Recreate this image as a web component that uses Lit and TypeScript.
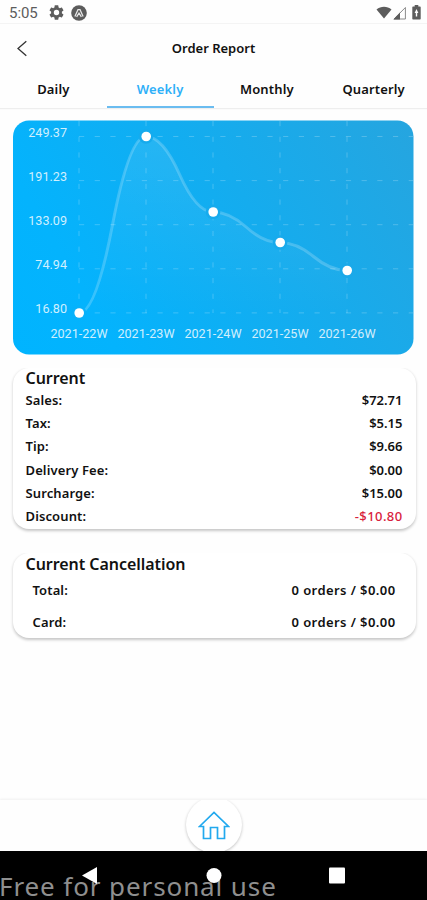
import { LitElement, html, svg, css } from "lit";
import { customElement, property, state } from "lit/decorators.js";
import { classMap } from "lit/directives/class-map.js";

interface Sample {
  week: string;
  x: number;
  y: number;
  halo: string;
}

@customElement("status-bar")
class StatusBar extends LitElement {
  static styles = css`
    :host {
      display: flex;
      align-items: center;
      height: 24px;
      padding: 2px 6px 0 9px;
      box-sizing: border-box;
      border-bottom: 1px solid #f4f4f4;
      color: #5c5c5c;
      font: 15px/22px Roboto, sans-serif;
    }
    .time { letter-spacing: -0.05px; width: 40px; }
    .gear { margin-right: 7px; }
    .spacer { flex: 1; }
    .signal { margin: 0 6px 0 1px; }
  `;
  render() {
    return html`
      <span class="time">5:05</span>
      <svg class="gear" width="15" height="15" viewBox="2 2 20 20">
        <path fill="#5c5c5c" fill-rule="evenodd" d="M19.14 12.94c.04-.3.06-.61.06-.94s-.02-.64-.07-.94l2.03-1.58c.18-.14.23-.41.12-.61l-1.92-3.32c-.12-.22-.37-.29-.59-.22l-2.39.96c-.5-.38-1.03-.7-1.62-.94l-.36-2.54A.48.48 0 0 0 13.92 2.4h-3.84c-.24 0-.43.17-.47.41l-.36 2.54c-.59.24-1.13.57-1.62.94l-2.39-.96c-.22-.08-.47 0-.59.22L2.74 8.87c-.12.21-.08.47.12.61l2.03 1.58c-.05.3-.09.63-.09.94s.02.64.07.94l-2.03 1.58c-.18.14-.23.41-.12.61l1.92 3.32c.12.22.37.29.59.22l2.39-.96c.5.38 1.03.7 1.62.94l.36 2.54c.05.24.24.41.48.41h3.84c.24 0 .44-.17.47-.41l.36-2.54c.59-.24 1.13-.56 1.62-.94l2.39.96c.22.08.47 0 .59-.22l1.92-3.32c.12-.22.07-.47-.12-.61zM12 15.6a3.6 3.6 0 1 1 0-7.2 3.6 3.6 0 0 1 0 7.2z"></path>
      </svg>
      <svg width="16" height="16" viewBox="0 0 16 16">
        <circle cx="8" cy="8" r="7.8" fill="#5c5c5c"></circle>
        <path d="M3.9 11.6L7 4.6h2l3.1 7M5.6 11.8L8 8.2l2.4 3.6" fill="none" stroke="#e8e8e8" stroke-width="1.3"></path>
      </svg>
      <span class="spacer"></span>
      <svg width="16" height="13" viewBox="0 0 16 13">
        <path fill="#5c5c5c" d="M.5 3.4C4.8-.2 11.2-.2 15.5 3.4L8 12.6z"></path>
      </svg>
      <svg class="signal" width="13" height="14" viewBox="0 0 13 14">
        <path fill="none" stroke="#8a8a8a" d="M1 13L12.4 1.5V13z"></path>
        <path fill="#5c5c5c" d="M.3 13.4L7 6.6v6.8z"></path>
      </svg>
      <svg width="9" height="15" viewBox="0 0 9 15">
        <path fill="#5c5c5c" fill-rule="evenodd" d="M2.7 0h3.6v1.5H8a.7.7 0 0 1 .7.7v11.6a.7.7 0 0 1-.7.7H1a.7.7 0 0 1-.7-.7V2.2a.7.7 0 0 1 .7-.7h1.7zM4.5 4L2.600 8h1.2v3.5h1.4V8h1.2z"></path>
      </svg>
    `;
  }
}

@customElement("sales-chart")
class SalesChart extends LitElement {
  static styles = css`
    :host { display: block; margin: 11px 13px 0; height: 235px; }
    svg { display: block; }
    .label { fill: #fff; fill-opacity: 0.82; font: 12.6px Roboto, sans-serif; }
    .end { text-anchor: end; }
    .mid { text-anchor: middle; }
    .grid { stroke: #fff; stroke-opacity: 0.22; stroke-dasharray: 5.2 10.5; }
    .line { fill: none; stroke: #fff; stroke-opacity: 0.2; stroke-width: 3; }
  `;

  private samples: Sample[] = [
    { week: "2021-22W", x: 66, y: 193, halo: "#08b1fa" },
    { week: "2021-23W", x: 133, y: 16.5, halo: "#16abed" },
    { week: "2021-24W", x: 200, y: 92, halo: "#17abed" },
    { week: "2021-25W", x: 267, y: 122.5, halo: "#19aaec" },
    { week: "2021-26W", x: 334, y: 150.5, halo: "#1ba9e9" },
  ];
  private ticks = ["249.37", "191.23", "133.09", "74.94", "16.80"];

  private curve() {
    const p = this.samples;
    let d = `M${p[0].x} ${p[0].y}`;
    for (let i = 0; i < p.length - 1; i++) {
      const a = p[i];
      const b = p[i + 1];
      const mx = (a.x + b.x) / 2;
      const my = (a.y + b.y) / 2;
      d += ` Q${(a.x + mx) / 2} ${a.y} ${mx} ${my} Q${(b.x + mx) / 2} ${b.y} ${b.x} ${b.y}`;
    }
    return d;
  }

  render() {
    const d = this.curve();
    return html`
      <svg width="401" height="235" viewBox="0 0 401 235">
        <defs>
          <linearGradient id="bg" gradientUnits="userSpaceOnUse" x1="0" y1="235" x2="401" y2="0">
            <stop offset="0" stop-color="#00b4ff"></stop>
            <stop offset="0.2" stop-color="#04b3fd"></stop>
            <stop offset="1" stop-color="#26a5df"></stop>
          </linearGradient>
          <linearGradient id="area" x1="0" y1="0" x2="0" y2="1">
            <stop offset="0" stop-color="#fff" stop-opacity="0.09"></stop>
            <stop offset="1" stop-color="#fff" stop-opacity="0"></stop>
          </linearGradient>
        </defs>
        <rect y="0.5" width="400.5" height="234" rx="16" fill="url(#bg)"></rect>
        <path d="${d} L334 193 L66 193Z" fill="url(#area)"></path>
        ${this.ticks.map((t, i) => {
          const y = 16.5 + i * 44.1;
          return svg`<line class="grid" x1="66" x2="400" y1=${y} y2=${y}></line>
            <text class="label end" x="54" y=${y}>${t}</text>`;
        })}
        ${this.samples.map(
          (s) => svg`<line class="grid" x1=${s.x} x2=${s.x} y1="1" y2="193"></line>
            <text class="label mid" x=${s.x} y="217.500">${s.week}</text>`
        )}
        <path class="line" d=${d}></path>
        ${this.samples.map(
          (s) => svg`<circle cx=${s.x} cy=${s.y} r="7.300" fill=${s.halo}></circle>
            <circle cx=${s.x + 0.2} cy=${s.y} r="4.800" fill="#fff"></circle>`
        )}
      </svg>
    `;
  }
}

@customElement("summary-card")
class SummaryCard extends LitElement {
  @property() heading = "";
  @property({ attribute: false }) rows: [string, string][] = [];
  @property({ type: Boolean, reflect: true }) roomy = false;

  static styles = css`
    :host {
      display: block;
      box-sizing: border-box;
      margin: 13px 11.5px 0 12.5px;
      height: 161px;
      padding: 0 13px;
      border-radius: 16px;
      background: #fff;
      box-shadow: 0 1.5px 3px rgba(0, 0, 0, 0.22);
      clip-path: inset(0 -6px -8px -6px);
      font-family: "Noto Sans", sans-serif;
      color: #111;
    }
    :host([roomy]) { margin-top: 24px; height: 85px; }
    .heading { font-size: 16px; font-weight: 600; line-height: 20px; height: 20.5px; letter-spacing: -0.05px; }
    .row {
      display: flex;
      justify-content: space-between;
      height: 23.4px;
      line-height: 23.4px;
      font-size: 13px;
      font-weight: 600;
      letter-spacing: 0.12px;
    }
    .value { letter-spacing: 0; }
    .negative { color: #d8213b; font-weight: 500; letter-spacing: 0.4px; }
    :host([roomy]) .heading { height: 21px; line-height: 22px; }
    :host([roomy]) .row { height: 32px; line-height: 32px; padding: 0 7px; }
    :host([roomy]) .value { letter-spacing: 0.42px; }
  `;

  render() {
    return html`
      <div class="heading">${this.heading}</div>
      ${this.rows.map(
        ([name, value]) => html`<div class="row">
          <span>${name}</span>
          <span class=${classMap({ value: true, negative: value.startsWith("-") })}>${value}</span>
        </div>`
      )}
    `;
  }
}

@customElement("app-root")
class AppRoot extends LitElement {
  @state() private active = "Weekly";

  static styles = css`
    :host {
      display: flex;
      flex-direction: column;
      width: 427px;
      height: 900px;
      overflow: hidden;
      background: #fefefe;
      font-family: "Noto Sans", sans-serif;
    }
    .header {
      display: grid;
      grid-template-columns: 60px 1fr 60px;
      align-items: center;
      height: 48px;
      color: #111;
    }
    .back { margin-left: 16px; }
    .title { text-align: center; font-size: 13px; font-weight: 600; }
    .tabs {
      display: grid;
      grid-template-columns: repeat(4, 1fr);
      height: 36px;
      margin-bottom: 1px;
      box-sizing: border-box;
      box-shadow: 0 1px 1px #eee;
    }
    .tab {
      box-sizing: border-box;
      text-align: center;
      font-size: 13px;
      font-weight: 600;
      line-height: 34px;
      letter-spacing: 0.15px;
      color: #111;
      border-bottom: 2px solid transparent;
    }
    .active { color: #2fb0f8; border-color: #6abcf0; }
    .fill { flex: 1; }
    .dock {
      display: flex;
      justify-content: center;
      height: 51px;
      box-shadow: 0 -1px 2px #f0f0f0;
      overflow: hidden;
    }
    .home {
      display: grid;
      place-items: center;
      flex: none;
      width: 56px;
      height: 56px;
      margin-top: -3px;
      border-radius: 50%;
      background: #fff;
      box-shadow: 0 1px 3px rgba(0, 0, 0, 0.24);
    }
    .system { position: relative; height: 49px; background: #000; flex: none; }
    .keys { position: absolute; inset: 0; }
    .note {
      position: absolute;
      left: -1px;
      bottom: -4px;
      font-size: 26px;
      line-height: 36px;
      letter-spacing: 0.9px;
      white-space: nowrap;
      color: #8f8f8f;
    }
  `;

  render() {
    return html`
      <status-bar></status-bar>
      <div class="header">
        <svg class="back" width="12" height="17" viewBox="0 0 12 17">
          <path d="M10.3 1.2L2 8.5l8.3 7.3" fill="none" stroke="#333" stroke-width="1.3"></path>
        </svg>
        <span class="title">Order Report</span>
      </div>
      <div class="tabs">
        ${["Daily", "Weekly", "Monthly", "Quarterly"].map(
          (t) => html`<div class=${classMap({ tab: true, active: t === this.active })} @click=${() => (this.active = t)}>${t}</div>`
        )}
      </div>
      <sales-chart></sales-chart>
      <summary-card
        heading="Current"
        .rows=${[
          ["Sales:", "$72.71"],
          ["Tax:", "$5.15"],
          ["Tip:", "$9.66"],
          ["Delivery Fee:", "$0.00"],
          ["Surcharge:", "$15.00"],
          ["Discount:", "-$10.80"],
        ]}
      ></summary-card>
      <summary-card
        roomy
        heading="Current Cancellation"
        .rows=${[
          ["Total:", "0 orders / $0.00"],
          ["Card:", "0 orders / $0.00"],
        ]}
      ></summary-card>
      <div class="fill"></div>
      <div class="dock">
        <div class="home">
          <svg width="32" height="30" viewBox="0 0 32 30">
            <path d="M1.500 16.500L16 2.500l14.500 14h-4V28.500h-7V17.500h-7v11h-7V16.500z" fill="none" stroke="#22a9ee" stroke-width="1.700"></path>
          </svg>
        </div>
      </div>
      <div class="system">
        <span class="note">Free for personal use</span>
        <svg class="keys" width="427" height="49" viewBox="0 0 427 49">
          <path fill="#fff" d="M97 16v17L82 24.500z"></path>
          <circle cx="214" cy="24.500" r="7.500" fill="#fff"></circle>
          <rect x="329" y="16.500" width="16" height="16" rx="1" fill="#fff"></rect>
        </svg>
      </div>
    `;
  }
}
